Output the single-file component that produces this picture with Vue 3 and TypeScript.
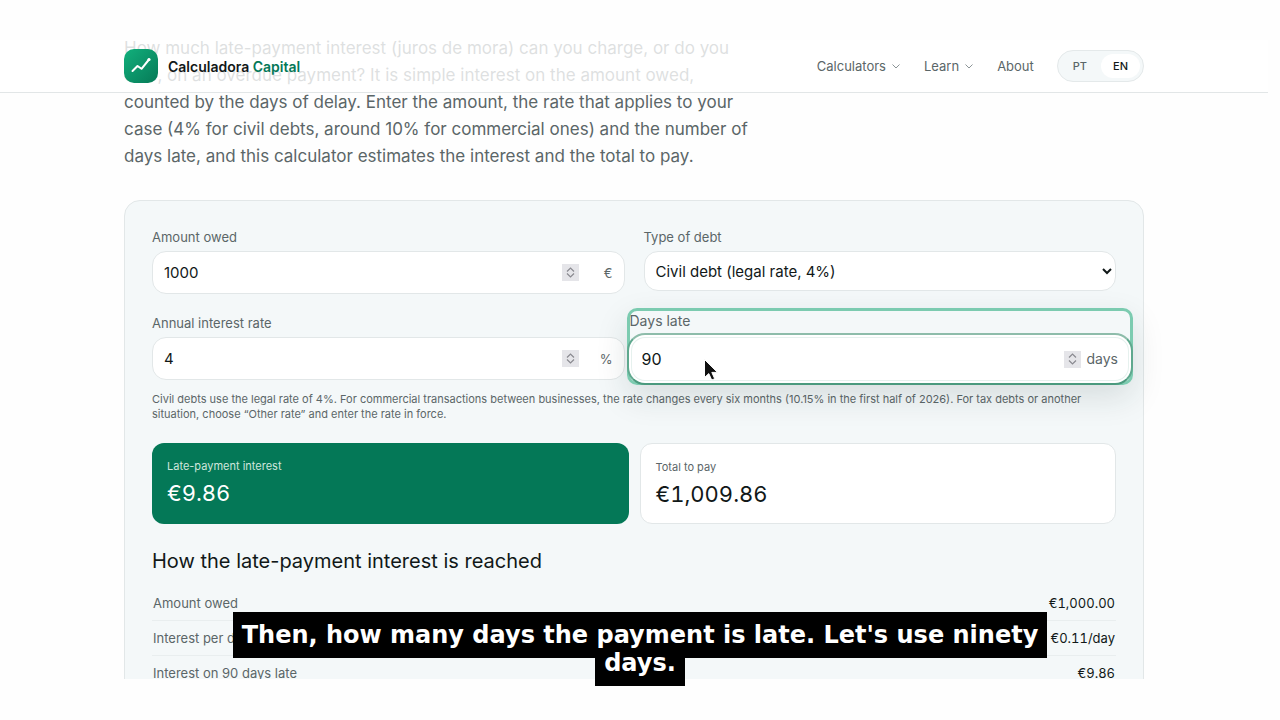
<script setup lang="ts">
import { computed, ref } from 'vue'

const amount = ref(1000)
const rate = ref(4)
const days = ref(90)
const debtType = ref('civil')

const euro = new Intl.NumberFormat('en-IE', { style: 'currency', currency: 'EUR' })
const perDay = computed(() => (amount.value * rate.value) / 100 / 365)
const interest = computed(() => perDay.value * days.value)
const total = computed(() => amount.value + interest.value)

const rows = computed(() => [
  { label: 'Amount owed', value: euro.format(amount.value) },
  { label: 'Interest per day', value: `${euro.format(perDay.value)}/day` },
  { label: `Interest on ${days.value} days late`, value: euro.format(interest.value) },
])
</script>

<template>
  <div class="stage">
    <div class="viewport">
      <header class="topbar">
        <div class="container bar">
          <a class="brand" href="#">
            <svg class="logo" viewBox="0 0 34 34" aria-hidden="true">
              <defs>
                <linearGradient id="logo-fill" x1="0" y1="0" x2="1" y2="1">
                  <stop offset="0" stop-color="#12b07c" />
                  <stop offset="1" stop-color="#067a57" />
                </linearGradient>
              </defs>
              <rect width="34" height="34" rx="10" fill="url(#logo-fill)" />
              <path d="M8.500 22 13.500 17l4 2.800L25 10.500" fill="none" stroke="#fff" stroke-width="2" stroke-linecap="round" stroke-linejoin="round" />
              <circle cx="25" cy="10.500" r="1.600" fill="#fff" />
            </svg>
            <span>Calculadora <span class="accent">Capital</span></span>
          </a>
          <nav class="nav" aria-label="Main">
            <button type="button" class="nav-item">
              Calculators
              <svg class="chev" viewBox="0 0 10 10" aria-hidden="true"><path d="M1.500 3.500 5 7l3.500-3.500" /></svg>
            </button>
            <button type="button" class="nav-item">
              Learn
              <svg class="chev" viewBox="0 0 10 10" aria-hidden="true"><path d="M1.500 3.500 5 7l3.500-3.500" /></svg>
            </button>
            <a class="nav-item" href="#">About</a>
            <div class="lang">
              <a href="#">PT</a>
              <a href="#" class="on" aria-current="true">EN</a>
            </div>
          </nav>
        </div>
      </header>

      <main class="container main">
        <p class="intro">
          How much late-payment interest (juros de mora) can you charge, or do you owe, on an overdue
          payment? It is simple interest on the amount owed, counted by the days of delay. Enter the
          amount, the rate that applies to your case (4% for civil debts, around 10% for commercial
          ones) and the number of days late, and this calculator estimates the interest and the total
          to pay.
        </p>

        <section class="card">
          <div class="fields">
            <div class="field">
              <label for="amount">Amount owed</label>
              <div class="box">
                <input id="amount" v-model.number="amount" type="number" />
                <span class="spin">
                  <button type="button" aria-label="Increase amount" @click="amount++"><svg viewBox="0 0 9 5"><path d="M1 4.500 4.500 1 8 4.500" /></svg></button>
                  <button type="button" aria-label="Decrease amount" @click="amount--"><svg viewBox="0 0 9 5"><path d="M1 .5 4.500 4 8 .5" /></svg></button>
                </span>
                <span class="unit">€</span>
              </div>
            </div>

            <div class="field">
              <label for="debt">Type of debt</label>
              <select id="debt" v-model="debtType">
                <option value="civil">Civil debt (legal rate, 4%)</option>
                <option value="other">Other rate</option>
              </select>
            </div>

            <div class="field">
              <label for="rate">Annual interest rate</label>
              <div class="box">
                <input id="rate" v-model.number="rate" type="number" />
                <span class="spin">
                  <button type="button" aria-label="Increase rate" @click="rate++"><svg viewBox="0 0 9 5"><path d="M1 4.500 4.500 1 8 4.500" /></svg></button>
                  <button type="button" aria-label="Decrease rate" @click="rate--"><svg viewBox="0 0 9 5"><path d="M1 .5 4.500 4 8 .5" /></svg></button>
                </span>
                <span class="unit">%</span>
              </div>
            </div>

            <div class="field spotlight">
              <label for="days">Days late</label>
              <div class="box">
                <input id="days" v-model.number="days" type="number" />
                <span class="spin">
                  <button type="button" aria-label="Increase days" @click="days++"><svg viewBox="0 0 9 5"><path d="M1 4.500 4.500 1 8 4.500" /></svg></button>
                  <button type="button" aria-label="Decrease days" @click="days--"><svg viewBox="0 0 9 5"><path d="M1 .5 4.500 4 8 .5" /></svg></button>
                </span>
                <span class="unit">days</span>
              </div>
              <svg class="cursor" viewBox="0 0 16 24" aria-hidden="true">
                <path d="M1.500 1.500v18l4.300-3.900 2.900 6.400 3-1.300-2.900-6.300h5.700z" />
              </svg>
            </div>
          </div>

          <p class="hint">
            Civil debts use the legal rate of 4%. For commercial transactions between businesses, the
            rate changes every six months (10.15% in the first half of 2026). For tax debts or another
            situation, choose “Other rate” and enter the rate in force.
          </p>

          <div class="results">
            <div class="result main-result">
              <span class="result-label">Late-payment interest</span>
              <output class="result-value">{{ euro.format(interest) }}</output>
            </div>
            <div class="result">
              <span class="result-label">Total to pay</span>
              <output class="result-value">{{ euro.format(total) }}</output>
            </div>
          </div>

          <h2>How the late-payment interest is reached</h2>
          <table>
            <tbody>
              <tr v-for="row in rows" :key="row.label">
                <th scope="row">{{ row.label }}</th>
                <td>{{ row.value }}</td>
              </tr>
            </tbody>
          </table>
        </section>
      </main>
    </div>

    <p class="caption">
      <span class="caption-bg"><span class="caption-text">Then, how many days the payment is late. Let's use ninety days.</span></span>
    </p>
  </div>
</template>

<style>
body {
  margin: 0;
  background: #fefefe;
}
</style>

<style scoped>
.stage,
.stage * {
  box-sizing: border-box;
}
.stage {
  position: relative;
  height: 100vh;
  padding: 40px 12px 41px 0;
  overflow: hidden;
  font-family: Inter, 'Liberation Sans', sans-serif;
  color: #111818;
}
.viewport {
  position: relative;
  height: 100%;
  overflow: hidden;
}
.container {
  width: 100%;
  max-width: 1020px;
  margin: 0 auto;
}
.topbar {
  position: absolute;
  inset: 0 0 auto;
  z-index: 5;
  background: rgba(255, 255, 255, 0.8);
  border-bottom: 1px solid #e2e6e7;
}
.bar {
  display: flex;
  align-items: center;
  justify-content: space-between;
  height: 52px;
}
.brand {
  display: flex;
  align-items: center;
  gap: 10px;
  color: #111818;
  font-size: 14px;
  font-weight: 600;
  text-decoration: none;
}
.accent {
  color: #047857;
}
.logo {
  width: 34px;
  height: 34px;
}
.nav {
  display: flex;
  align-items: center;
  gap: 23px;
}
.nav-item {
  display: flex;
  align-items: center;
  gap: 5px;
  padding: 0;
  border: 0;
  background: none;
  color: #5b6668;
  font: 400 13px/20px Inter, 'Liberation Sans', sans-serif;
  text-decoration: none;
}
.chev {
  width: 10px;
  height: 10px;
  fill: none;
  stroke: #8b9496;
}
.lang {
  display: flex;
  gap: 2px;
  padding: 3px;
  border: 1px solid #e4e9ea;
  border-radius: 16px;
  background: #f4f8f9;
}
.lang a {
  padding: 0 12px;
  border-radius: 12px;
  color: #5b6668;
  font-size: 11px;
  font-weight: 500;
  line-height: 24px;
  text-decoration: none;
}
.lang .on {
  background: #fff;
  color: #111818;
}
.main {
  margin-top: -5px;
}
.intro {
  max-width: 625px;
  margin: 0;
  color: #5b6668;
  font-size: 17px;
  line-height: 27px;
}
.card {
  margin-top: 30px;
  padding: 26px 27px;
  border: 1px solid #e2e7e8;
  border-radius: 16px;
  background: #f4f8f9;
}
.fields {
  display: grid;
  grid-template-columns: 1fr 1fr;
  gap: 19px;
  align-items: start;
}
label {
  display: block;
  padding-bottom: 4px;
  color: #5b6668;
  font-size: 13px;
  line-height: 20px;
}
.box {
  display: flex;
  align-items: center;
  height: 43px;
  padding: 0 11px;
  border: 1px solid #e2e7e8;
  border-radius: 14px;
  background: #fff;
}
.box input {
  flex: 1;
  min-width: 0;
  padding: 0;
  border: 0;
  outline: 0;
  background: none;
  color: #111818;
  font: 400 15px/24px Inter, 'Liberation Sans', sans-serif;
  appearance: textfield;
}
.box input::-webkit-inner-spin-button {
  appearance: none;
  margin: 0;
}
.spin {
  display: flex;
  flex-direction: column;
  width: 17px;
  height: 17px;
  padding: 2px 0;
  background: #e5e5e9;
}
.spin button {
  display: flex;
  flex: 1;
  align-items: center;
  justify-content: center;
  padding: 0;
  border: 0;
  background: none;
}
.spin svg {
  width: 9px;
  height: 5px;
  fill: none;
  stroke: #8a8a90;
  stroke-width: 1.2;
}
.unit {
  width: 34px;
  color: #5b6668;
  font-size: 13px;
  line-height: 20px;
  text-align: right;
}
select {
  display: block;
  width: 100%;
  height: 40px;
  padding: 0 0 0 7px;
  border: 1px solid #e2e7e8;
  border-radius: 14px;
  background: #fff;
  color: #111818;
  font: 400 15px/24px Inter, 'Liberation Sans', sans-serif;
}
.spotlight {
  position: relative;
  z-index: 2;
  margin: -5px -17px;
  border-radius: 10px;
  background: #f4f8f9;
  box-shadow: inset 0 0 0 3px #7ccbb0, 0 12px 32px rgba(20, 50, 45, 0.13);
}
.spotlight label {
  padding: 3px 3px 2px;
  font-size: 14px;
  line-height: 20px;
}
.spotlight .box {
  height: 52px;
  padding: 0 13px;
  border: 2px solid #5fa88e;
  border-top-color: #8dbcaa;
  border-bottom-color: #4b9a7e;
  border-radius: 18px;
  box-shadow: inset 0 0 0 2px #fff, inset 0 0 0 3px #e6f1ee;
}
.spotlight input {
  font-size: 16px;
}
.spotlight .unit {
  width: 37px;
  font-size: 14px;
}
.cursor {
  position: absolute;
  left: 76px;
  top: 50px;
  width: 16px;
  height: 24px;
  fill: #111;
  stroke: #fff;
  stroke-width: 1;
}
.hint {
  margin: 12px 0 0;
  color: #5b6668;
  font-size: 11px;
  line-height: 15px;
}
.results {
  display: grid;
  grid-template-columns: 1fr 1fr;
  gap: 11px;
  margin-top: 21px;
}
.result {
  display: flex;
  flex-direction: column;
  height: 81px;
  padding: 15px;
  border: 1px solid #e2e7e8;
  border-radius: 12px;
  background: #fff;
}
.main-result {
  border: 0;
  background: #047857;
  color: #fff;
}
.result-label {
  color: #5b6668;
  font-size: 11px;
  line-height: 17px;
}
.main-result .result-label {
  color: #cfe6dd;
}
.result-value {
  font-size: 22px;
  font-variant-numeric: tabular-nums;
  line-height: 36px;
}
h2 {
  margin: 23px 0 11px;
  font-size: 20px;
  font-weight: 400;
  line-height: 28px;
}
table {
  width: 100%;
  border-collapse: collapse;
  font-size: 13px;
  line-height: 20px;
}
th,
td {
  padding: 7px 1px;
  border-bottom: 1px solid #e9eeef;
  font-weight: 400;
}
th {
  color: #5b6668;
  text-align: left;
}
td {
  font-variant-numeric: tabular-nums;
  text-align: right;
}
.caption {
  position: absolute;
  inset: auto 0 43px;
  z-index: 10;
  max-width: 850px;
  margin: 0 auto;
  font: 700 24px/28px 'DejaVu Sans', sans-serif;
  text-align: center;
}
.caption-bg {
  padding: 9px;
  background: #000;
  -webkit-box-decoration-break: clone;
  box-decoration-break: clone;
}
.caption-text {
  position: relative;
  color: #fff;
}
</style>
